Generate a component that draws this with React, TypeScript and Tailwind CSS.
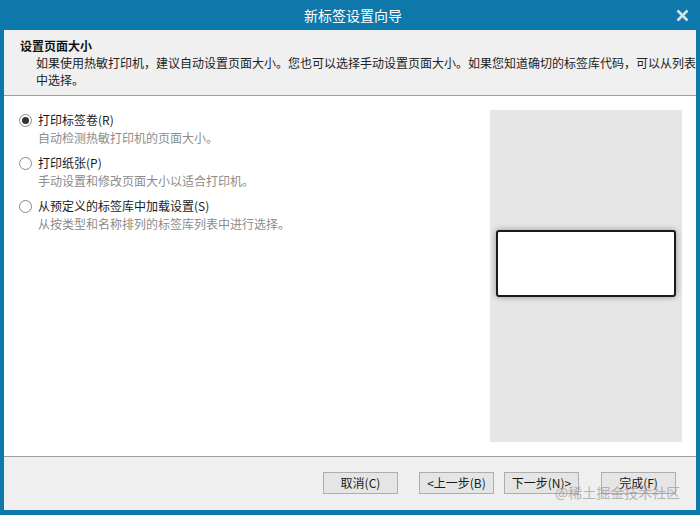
import React from "react";

const font = { fontFamily: '"Noto Sans CJK SC", "Noto Sans", sans-serif' };

function Radio({ checked }: { checked?: boolean }) {
  return (
    <span className="w-[13px] h-[13px] rounded-full border border-[#8a8a8a] bg-white flex items-center justify-center shrink-0">
      {checked && <span className="w-[7px] h-[7px] rounded-full bg-[#333]" />}
    </span>
  );
}

function Option({ label, desc, checked }: { label: string; desc: string; checked?: boolean }) {
  return (
    <div className="flex flex-col">
      <div className="flex items-center gap-[6px] h-[18px]">
        <Radio checked={checked} />
        <span className="text-[12px] text-[#1a1a1a] leading-[18px]">{label}</span>
      </div>
      <div className="pl-[19px] text-[12px] text-[#8c8c8c] leading-[18px]">{desc}</div>
    </div>
  );
}

function Btn({ children }: { children: React.ReactNode }) {
  return (
    <button className="w-[75px] h-[22px] border border-[#adadad] bg-[#e5e5e5] text-[12px] text-[#1a1a1a] leading-none flex items-center justify-center">
      {children}
    </button>
  );
}

export default function App() {
  return (
    <div className="w-[700px] h-[515px] bg-[#0e78ab] flex flex-col px-[4px] pb-[5px] overflow-hidden" style={font}>
      <div className="h-[30px] relative flex items-center justify-center shrink-0">
        <span className="text-white text-[14px] pl-[6px]">新标签设置向导</span>
        <svg className="absolute right-[7px] top-[9px]" width="13" height="13" viewBox="0 0 13 13">
          <path d="M1.5 1.5 L11.5 11.5 M11.5 1.5 L1.5 11.5" stroke="#cfe6f2" strokeWidth="2.6" strokeLinecap="butt" />
        </svg>
      </div>
      <div className="flex-1 flex flex-col bg-white min-h-0">
        <div className="h-[66px] bg-[#f0f0f0] border-b border-[#a0a0a0] pl-[16px] pt-[7px] shrink-0">
          <div className="text-[12px] font-bold text-[#111] leading-[17px]">设置页面大小</div>
          <div className="pl-[16px] text-[12px] text-[#222] leading-[17px] whitespace-nowrap">
            如果使用热敏打印机，建议自动设置页面大小。您也可以选择手动设置页面大小。如果您知道确切的标签库代码，可以从列表
          </div>
          <div className="pl-[16px] text-[12px] text-[#222] leading-[17px]">中选择。</div>
        </div>
        <div className="flex-1 flex min-h-0">
          <div className="flex-1 flex flex-col gap-[7px] pl-[15px] pt-[15px]">
            <Option checked label="打印标签卷(R)" desc="自动检测热敏打印机的页面大小。" />
            <Option label="打印纸张(P)" desc="手动设置和修改页面大小以适合打印机。" />
            <Option label="从预定义的标签库中加载设置(S)" desc="从按类型和名称排列的标签库列表中进行选择。" />
          </div>
          <div className="w-[192px] mr-[14px] mt-[14px] mb-[14px] bg-[#e6e6e6] flex flex-col pt-[120px]">
            <div className="mx-[6px] h-[67px] bg-white border-2 border-[#1a1a1a] rounded-[3px] shadow-[0_0_6px_rgba(0,0,0,0.35)]" />
          </div>
        </div>
        <div className="h-[54px] bg-[#efefef] border-t border-[#a0a0a0] shrink-0 relative flex items-center pl-[319px] pb-[2px]">
          <div className="flex items-center">
            <Btn>取消(C)</Btn>
            <div className="w-[21px]" />
            <Btn>&lt;上一步(B)</Btn>
            <div className="w-[10px]" />
            <Btn>下一步(N)&gt;</Btn>
            <div className="w-[22px]" />
            <Btn>完成(F)</Btn>
          </div>
          <span className="absolute left-[551px] top-[25px] text-[14px] text-[#9a9a9a] opacity-70">@稀土掘金技术社区</span>
        </div>
      </div>
    </div>
  );
}
